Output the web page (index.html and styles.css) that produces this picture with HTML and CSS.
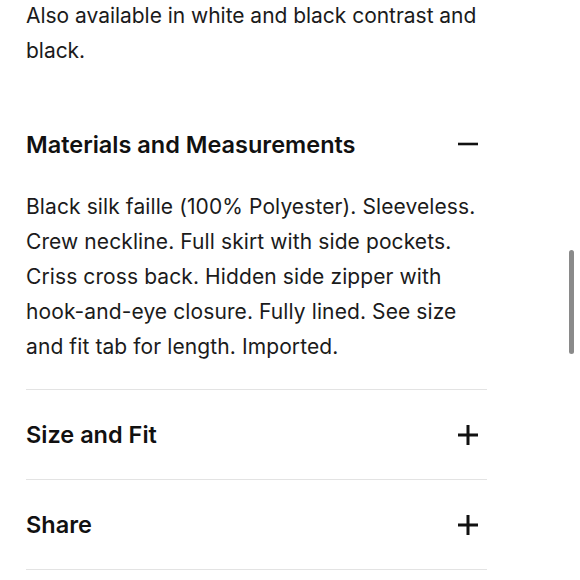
FILE: index.html
```html
<!DOCTYPE html>
<html lang="en">
<head>
<meta charset="utf-8">
<link rel="stylesheet" href="styles.css">
</head>
<body>
<div class="page">
  <p class="intro">Also available in white and black contrast and black.</p>
  <div class="acc">
    <div class="acc-item open">
      <div class="acc-head">
        <span class="acc-title">Materials and Measurements</span>
        <svg class="icon" width="22" height="22" viewBox="0 0 22 22"><path d="M1 11H21" stroke="#111" stroke-width="2.6"/></svg>
      </div>
      <p class="acc-body">Black silk faille (100% Polyester). Sleeveless. Crew neckline. Full skirt with side pockets. Criss cross back. Hidden side zipper with hook-and-eye closure. Fully lined. See size and fit tab for length. Imported.</p>
    </div>
    <div class="acc-item">
      <div class="acc-head">
        <span class="acc-title">Size and Fit</span>
        <svg class="icon" width="22" height="22" viewBox="0 0 22 22"><path d="M1 11H21M11 1V21" stroke="#111" stroke-width="3"/></svg>
      </div>
    </div>
    <div class="acc-item">
      <div class="acc-head">
        <span class="acc-title">Share</span>
        <svg class="icon" width="22" height="22" viewBox="0 0 22 22"><path d="M1 11H21M11 1V21" stroke="#111" stroke-width="3"/></svg>
      </div>
    </div>
  </div>
</div>
<div class="scrollbar"></div>
</body>
</html>
```
FILE: styles.css
```css
html, body {
  margin: 0;
  padding: 0;
  background: #fff;
}
body {
  font-family: Inter, "Noto Sans", sans-serif;
  color: #1b1b1b;
  overflow: hidden;
  height: 580px;
}
.page {
  width: 461px;
  padding-left: 26px;
}
.intro {
  margin: -2px 0 31px;
  font-size: 21px;
  letter-spacing: -0.03px;
  line-height: 35px;
}
.acc-item {
  border-bottom: 1px solid #e3e3e3;
}
.acc-head {
  height: 90px;
  display: flex;
  align-items: center;
  justify-content: space-between;
  padding-right: 8px;
}
.acc-item + .acc-item .acc-head {
  height: 89px;
}
.acc-title {
  font-size: 23.5px;
  font-weight: 600;
  color: #111;
}
.icon {
  display: block;
}
.acc-body {
  margin: 0;
  padding-bottom: 25px;
  font-size: 21px;
  letter-spacing: 0.1px;
  line-height: 35px;
}
.scrollbar {
  position: absolute;
  left: 569px;
  top: 250px;
  width: 5px;
  height: 104px;
  border-radius: 3px;
  background: #8a8a8a;
}
```
